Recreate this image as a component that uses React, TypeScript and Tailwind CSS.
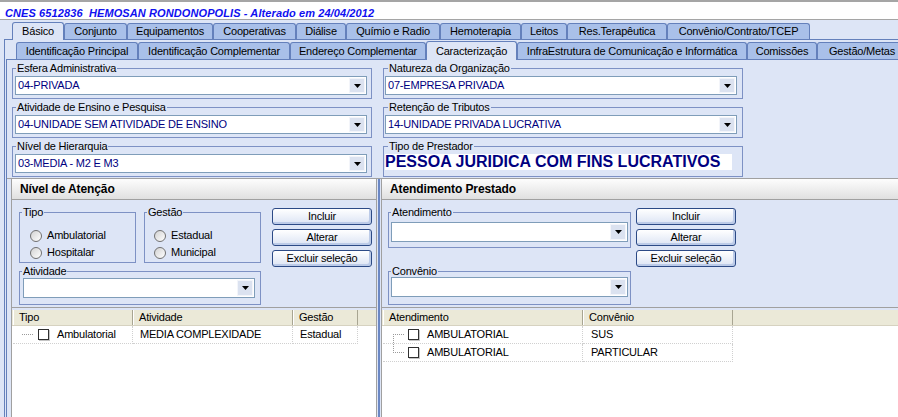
import React from 'react';
import clsx from 'clsx';

type TabDef = { label: string; w: string; active?: boolean };

const topTabs: TabDef[] = [
  { label: 'Básico', w: 'w-[52px]', active: true },
  { label: 'Conjunto', w: 'w-[63px]' },
  { label: 'Equipamentos', w: 'w-[86px]' },
  { label: 'Cooperativas', w: 'w-[83px]' },
  { label: 'Diálise', w: 'w-[50px]' },
  { label: 'Químio e Radio', w: 'w-[94px]' },
  { label: 'Hemoterapia', w: 'w-[81px]' },
  { label: 'Leitos', w: 'w-[46px]' },
  { label: 'Res.Terapêutica', w: 'w-[100px]' },
  { label: 'Convênio/Contrato/TCEP', w: 'w-[143px]' },
];

const subTabs: TabDef[] = [
  { label: 'Identificação Principal', w: 'w-[122px]' },
  { label: 'Identificação Complementar', w: 'w-[152px]' },
  { label: 'Endereço Complementar', w: 'w-[136px]' },
  { label: 'Caracterização', w: 'w-[91px]', active: true },
  { label: 'InfraEstrutura de Comunicação e Informática', w: 'w-[230px]' },
  { label: 'Comissões', w: 'w-[70px]' },
  { label: 'Gestão/Metas', w: 'w-[90px]' },
];

const Tab = ({ tab, h, activeH }: { tab: TabDef; h: string; activeH: string }) => (
  <div
    className={clsx(
      'flex shrink-0 items-center justify-center whitespace-nowrap rounded-t-[3px] border border-b-0 border-[#6480bb]',
      tab.w,
      tab.active ? clsx('relative z-10 -mb-px bg-[#dde5f6]', activeH) : clsx('bg-[#a9c0e9]', h),
    )}
  >
    {tab.label}
  </div>
);

const Field = ({
  label,
  legend = 'ml-[3px]',
  className,
  children,
}: {
  label: string;
  legend?: string;
  className?: string;
  children: React.ReactNode;
}) => (
  <fieldset className={clsx('min-w-0 border border-[#7d91c4]', className)}>
    <legend className={clsx('px-[1px] leading-[12px]', legend)}>{label}</legend>
    {children}
  </fieldset>
);

const Combo = ({ value, h = 'h-[19px]' }: { value?: string; h?: string }) => (
  <div className={clsx('flex border border-[#7f9db9] bg-white', h)}>
    <span className="flex flex-1 items-center truncate pl-[2px] text-[#000080]">{value}</span>
    <span className="m-px flex w-[16px] items-center justify-center border border-[#f3f5fa] bg-[#dbe2f0]">
      <svg width="7" height="4" viewBox="0 0 7 4">
        <path d="M0 0h7L3.5 4z" fill="#000" />
      </svg>
    </span>
  </div>
);

const Btn = ({ children }: { children: React.ReactNode }) => (
  <div className="flex h-[17px] w-[100px] items-center justify-center rounded-[3px] border border-[#2c4a86] bg-linear-to-b from-white to-[#dce4f4] shadow-[inset_-2px_-2px_0_#bccbe8]">
    {children}
  </div>
);

const Radio = ({ label }: { label: string }) => (
  <div className="flex h-[17px] items-center">
    <span className="h-[12px] w-[12px] rounded-full border border-[#707070] bg-linear-to-br from-[#d2d2d2] to-white" />
    <span className="ml-[5px]">{label}</span>
  </div>
);

const Check = () => (
  <span className="h-[11px] w-[11px] shrink-0 border border-[#303030] bg-white shadow-[1px_1px_0_#c4c4c4]" />
);

const PanelHeader = ({ children }: { children: React.ReactNode }) => (
  <div className="flex h-[21px] shrink-0 items-center border-b border-[#a0a0a0] bg-linear-to-b from-[#fdfdfd] to-[#e0e0e0] pl-[8px] text-[12px] font-bold tracking-[-0.1px]">
    {children}
  </div>
);

const HeadCell = ({ w, children }: { w: string; children: React.ReactNode }) => (
  <div className={clsx('flex items-center border-r border-[#a8a592] pl-[6px] shadow-[inset_1px_0_0_#fff]', w)}>
    {children}
  </div>
);

const cell = 'flex items-center border-r border-b border-dotted border-[#d0d0d0]';
const tree = 'border-dotted border-[#9a9a9a]';

export default function App() {
  return (
    <div className="flex h-[417px] w-[898px] flex-col overflow-hidden bg-[#dde5f6] font-['Liberation_Sans',Arial,sans-serif] text-[11px] leading-[13px] tracking-[-0.2px] text-black">
      {/* title strip */}
      <div className="h-[20px] shrink-0 border-t-2 border-b border-[#a5a5a5] bg-white pl-[5px] pt-[5px]">
        <span className="whitespace-pre font-bold italic tracking-[0.1px] text-[#1010f0]">
          CNES 6512836  HEMOSAN RONDONOPOLIS - Alterado em 24/04/2012
        </span>
      </div>

      {/* main tabs */}
      <div className="ml-[4px] flex h-[20px] shrink-0 items-end border-b border-[#6480bb] pl-[8px]">
        {topTabs.map((t) => (
          <Tab key={t.label} tab={t} h="h-[16px]" activeH="h-[18px]" />
        ))}
      </div>

      <div className="ml-[4px] flex min-h-0 flex-1 flex-col border-l border-[#6480bb]">
        {/* sub tabs */}
        <div className="ml-[1px] flex h-[20px] shrink-0 items-end border-b border-[#6480bb] pl-[10px]">
          {subTabs.map((t) => (
            <Tab key={t.label} tab={t} h="h-[17px]" activeH="h-[19px]" />
          ))}
        </div>

        <div className="ml-[1px] flex min-h-0 flex-1 flex-col border-l border-[#6480bb]">
          {/* caracterização fields */}
          <div className="flex shrink-0 gap-[11px] border-b border-[#a0a0a0] pb-[1px] pl-[5px] pt-[2px]">
            <div className="flex w-[360px] flex-col gap-[2px]">
              <Field label="Esfera Administrativa">
                <div className="pb-[3px] pl-[2px] pr-[4px] pt-[2px]">
                  <Combo value="04-PRIVADA" />
                </div>
              </Field>
              <Field label="Atividade de Ensino e Pesquisa">
                <div className="pb-[3px] pl-[2px] pr-[4px] pt-[2px]">
                  <Combo value="04-UNIDADE SEM ATIVIDADE DE ENSINO" />
                </div>
              </Field>
              <Field label="Nível de Hierarquia">
                <div className="pb-[3px] pl-[2px] pr-[4px] pt-[2px]">
                  <Combo value="03-MEDIA - M2 E M3" />
                </div>
              </Field>
            </div>
            <div className="flex w-[360px] flex-col gap-[2px]">
              <Field label="Natureza da Organização" legend="ml-[4px]">
                <div className="pb-[3px] pl-[1px] pr-[5px] pt-[2px]">
                  <Combo value="07-EMPRESA PRIVADA" />
                </div>
              </Field>
              <Field label="Retenção de Tributos" legend="ml-[4px]">
                <div className="pb-[3px] pl-[1px] pr-[5px] pt-[2px]">
                  <Combo value="14-UNIDADE PRIVADA LUCRATIVA" />
                </div>
              </Field>
              <Field label="Tipo de Prestador" legend="ml-[4px]">
                <div className="pb-[6px] pl-[1px] pt-[2px]">
                  <div className="h-[16px] w-[347px] whitespace-nowrap bg-white text-[16px] font-bold leading-[16px] tracking-normal text-[#000080]">
                    PESSOA JURIDICA COM FINS LUCRATIVOS
                  </div>
                </div>
              </Field>
            </div>
          </div>

          {/* lower panels */}
          <div className="flex min-h-0 flex-1">
            {/* Nível de Atenção */}
            <div className="ml-[4px] flex w-[366px] shrink-0 flex-col border-x border-[#a0a0a0]">
              <PanelHeader>Nível de Atenção</PanelHeader>
              <div className="flex shrink-0 gap-[11px] border-b border-[#a0a0a0] pb-[2px] pl-[7px] pt-[6px]">
                <div className="flex w-[242px] flex-col">
                  <div className="flex gap-[8px]">
                    <Field label="Tipo" legend="ml-[2px]" className="w-[117px]">
                      <div className="pb-[1px] pl-[10px] pt-[9px]">
                        <Radio label="Ambulatorial" />
                        <Radio label="Hospitalar" />
                      </div>
                    </Field>
                    <Field label="Gestão" legend="ml-[2px]" className="w-[117px]">
                      <div className="pb-[1px] pl-[9px] pt-[9px]">
                        <Radio label="Estadual" />
                        <Radio label="Municipal" />
                      </div>
                    </Field>
                  </div>
                  <Field label="Atividade" legend="ml-[2px]" className="mt-[2px]">
                    <div className="pb-[6px] pl-[3px] pr-[5px] pt-[1px]">
                      <Combo h="h-[20px]" />
                    </div>
                  </Field>
                </div>
                <div className="mt-[2px] flex flex-col gap-[4px]">
                  <Btn>Incluir</Btn>
                  <Btn>Alterar</Btn>
                  <Btn>Excluir seleção</Btn>
                </div>
              </div>
              <div className="mt-[2px] flex min-h-0 flex-1 flex-col bg-white">
                <div className="flex h-[16px] shrink-0 border-b border-[#d6d2c0] bg-[#ebe9d8] pl-[1px]">
                  <HeadCell w="w-[120px]">Tipo</HeadCell>
                  <HeadCell w="w-[160px]">Atividade</HeadCell>
                  <HeadCell w="w-[65px]">Gestão</HeadCell>
                </div>
                <div className="flex h-[18px] pl-[1px]">
                  <div className={clsx(cell, 'w-[120px]')}>
                    <span className={clsx('ml-[9px] w-[11px] border-t', tree)} />
                    <span className="ml-[5px] flex">
                      <Check />
                    </span>
                    <span className="ml-[8px]">Ambulatorial</span>
                  </div>
                  <div className={clsx(cell, 'w-[160px] pl-[7px]')}>MEDIA COMPLEXIDADE</div>
                  <div className={clsx(cell, 'w-[65px] pl-[7px]')}>Estadual</div>
                </div>
              </div>
            </div>

            {/* splitter */}
            <div className="ml-[1px] w-[2px] shrink-0 bg-[#6b87c4]" />

            {/* Atendimento Prestado */}
            <div className="ml-[1px] flex min-w-0 flex-1 flex-col border-l border-[#a0a0a0]">
              <PanelHeader>Atendimento Prestado</PanelHeader>
              <div className="flex shrink-0 gap-[5px] border-b border-[#a0a0a0] pb-[2px] pl-[6px] pt-[6px]">
                <div className="flex w-[243px] flex-col">
                  <Field label="Atendimento" legend="ml-[2px]">
                    <div className="pb-[5px] pl-[2px] pr-[2px] pt-[4px]">
                      <Combo h="h-[20px]" />
                    </div>
                  </Field>
                  <Field label="Convênio" legend="ml-[2px]" className="mt-[17px]">
                    <div className="pb-[7px] pl-[2px] pr-[2px]">
                      <Combo h="h-[20px]" />
                    </div>
                  </Field>
                </div>
                <div className="mt-[2px] flex flex-col gap-[4px]">
                  <Btn>Incluir</Btn>
                  <Btn>Alterar</Btn>
                  <Btn>Excluir seleção</Btn>
                </div>
              </div>
              <div className="mt-[2px] flex min-h-0 flex-1 flex-col bg-white">
                <div className="flex h-[16px] shrink-0 border-b border-[#d6d2c0] bg-[#ebe9d8] pl-[1px]">
                  <HeadCell w="w-[200px]">Atendimento</HeadCell>
                  <HeadCell w="w-[150px]">Convênio</HeadCell>
                </div>
                {[
                  { conv: 'SUS', last: false },
                  { conv: 'PARTICULAR', last: true },
                ].map((r) => (
                  <div key={r.conv} className="flex h-[18px] pl-[1px]">
                    <div className={clsx(cell, 'w-[200px] items-stretch')}>
                      <div className="ml-[10px] flex w-[11px] flex-col">
                        <span className={clsx(r.last ? 'h-[9px] border-l border-b' : 'h-[8px]', tree)} />
                        <span className={clsx('flex-1', !r.last && 'border-l border-t', tree)} />
                      </div>
                      <div className="flex items-center">
                        <span className="ml-[4px] flex">
                          <Check />
                        </span>
                        <span className="ml-[8px]">AMBULATORIAL</span>
                      </div>
                    </div>
                    <div className={clsx(cell, 'w-[150px] pl-[8px]')}>{r.conv}</div>
                  </div>
                ))}
              </div>
            </div>
          </div>
        </div>
      </div>
    </div>
  );
}
